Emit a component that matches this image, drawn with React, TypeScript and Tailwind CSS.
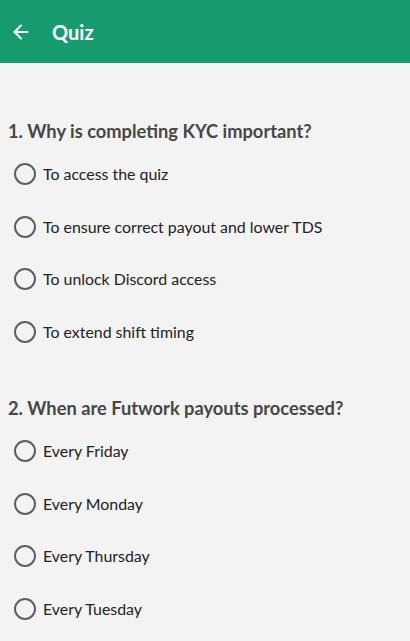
import { ArrowLeft } from "lucide-react";

type Question = {
  id: number;
  text: string;
  options: string[];
};

const questions: Question[] = [
  {
    id: 1,
    text: "Why is completing KYC important?",
    options: [
      "To access the quiz",
      "To ensure correct payout and lower TDS",
      "To unlock Discord access",
      "To extend shift timing",
    ],
  },
  {
    id: 2,
    text: "When are Futwork payouts processed?",
    options: ["Every Friday", "Every Monday", "Every Thursday", "Every Tuesday"],
  },
];

export default function App() {
  return (
    <div
      className="h-[641px] w-full overflow-hidden bg-[#f3f3f3]"
      style={{ fontFamily: "Lato, 'Open Sans', sans-serif" }}
    >
      <header className="h-[63px] bg-[#179c6f] flex items-center pl-[10px]">
        <ArrowLeft className="w-[22px] h-[22px] text-white" strokeWidth={2.2} />
        <h1 className="ml-[20px] text-[20px] font-bold text-white">Quiz</h1>
      </header>

      <main className="pt-[56px] flex flex-col gap-[38px]">
        {questions.map((q) => (
          <section key={q.id}>
            <h2 className="px-[8px] h-[24px] leading-[24px] text-[18.3px] font-bold text-[#474747] mb-[5px]">
              {q.id}. {q.text}
            </h2>
            <ul>
              {q.options.map((opt) => (
                <li key={opt} className="h-[52.5px] flex items-center pl-[14px]">
                  <span className="w-[22px] h-[22px] rounded-full border-[2.5px] border-[#5f5f5f]" />
                  <span className="ml-[7px] text-[15.9px] text-[#222]">{opt}</span>
                </li>
              ))}
            </ul>
          </section>
        ))}
      </main>
    </div>
  );
}
